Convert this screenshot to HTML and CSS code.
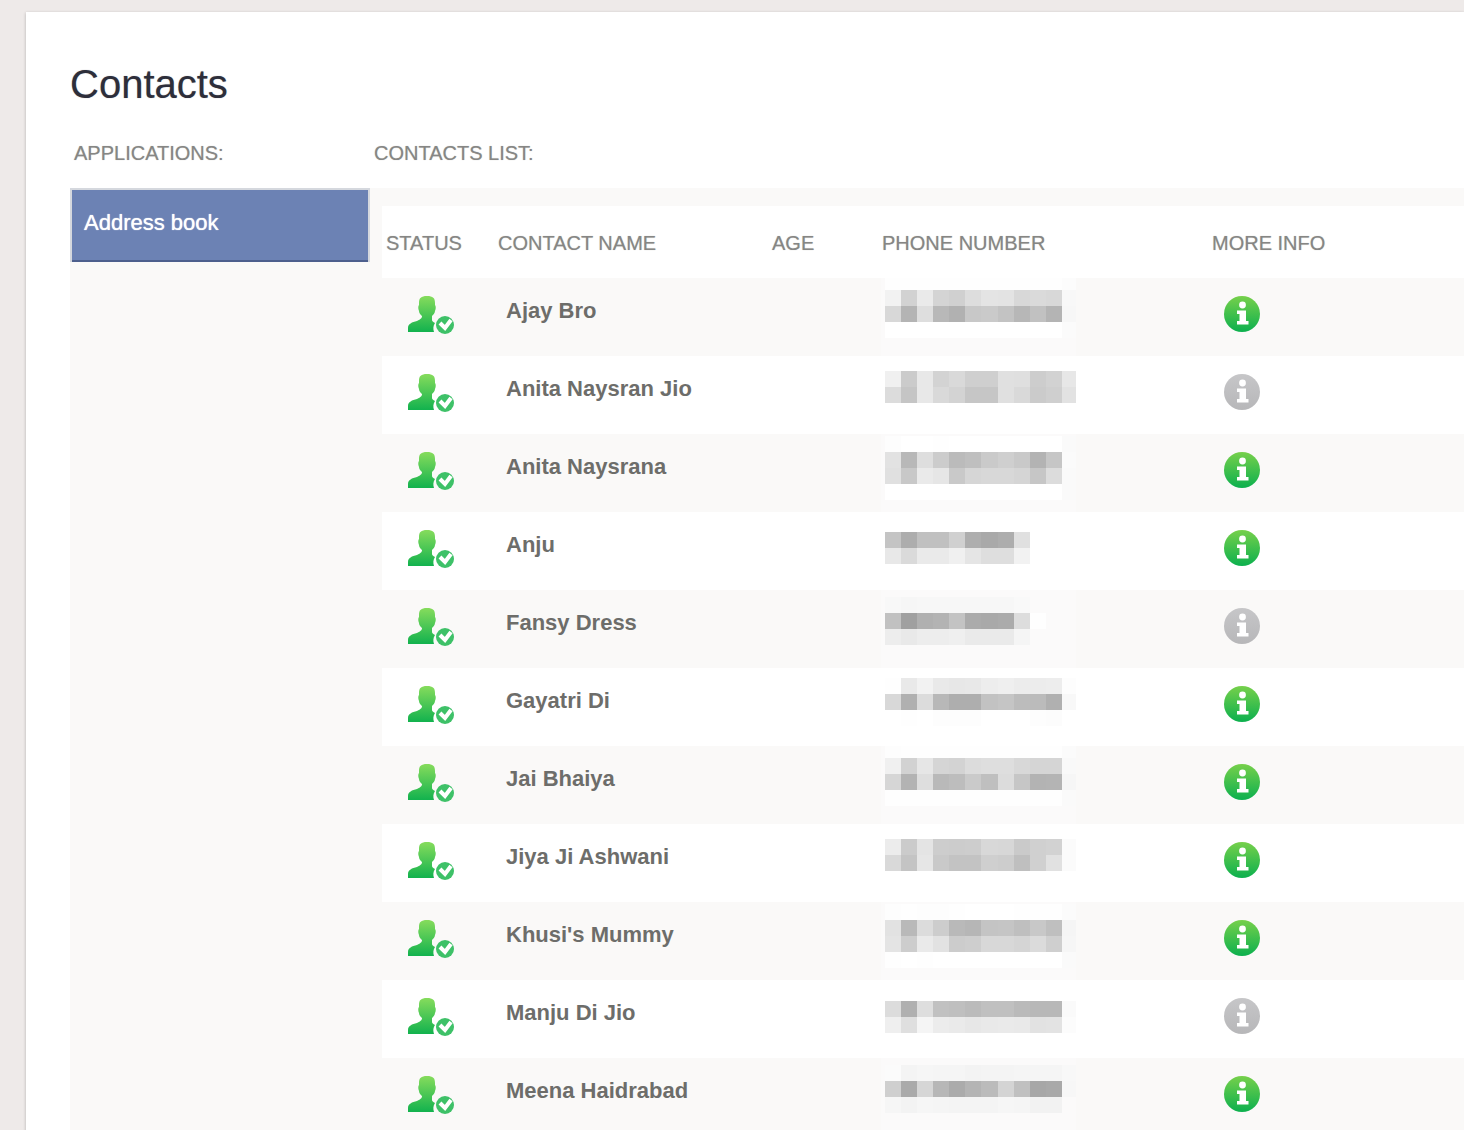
FILE: index.html
```html
<!DOCTYPE html>
<html lang="en">
<head>
<meta charset="utf-8">
<title>Contacts</title>
<link rel="stylesheet" href="styles.css">
</head>
<body>
<svg class="sprite" aria-hidden="true">
  <defs>
    <linearGradient id="green" x1="0" y1="0" x2="0" y2="1"><stop offset="0" stop-color="#86dc5c"/><stop offset="1" stop-color="#12b24e"/></linearGradient>
    <linearGradient id="green-info" x1="0" y1="0" x2="0" y2="1"><stop offset="0" stop-color="#76d04b"/><stop offset="1" stop-color="#0cb04e"/></linearGradient>
    <linearGradient id="gray-info" x1="0" y1="0" x2="0" y2="1"><stop offset="0" stop-color="#c6c6c8"/><stop offset="1" stop-color="#b7b7b9"/></linearGradient>
    <symbol id="person" viewBox="0 0 48 40">
      <path fill="url(#green)" d="M20 1c6 0 8 2 8 7v2c1 1 1 4 0 6 0 2-2 4-3 5v4c0 1 1 2 3 3-2 3-2 6-1 9H1v-4c0-4 4-6 9-7 4-2 5-3 5-5-2-2-3-3-3-5-1-2-1-5 0-6V8c0-5 2-7 8-7z"/>
      <circle cx="38" cy="30" r="9" fill="#3ec168"/>
      <path d="M33 28l5 5 6-8" fill="none" stroke="#fff" stroke-width="4"/>
    </symbol>
    <symbol id="letter" viewBox="0 0 36 36">
      <circle cx="18.5" cy="9" r="3.4" fill="#fff"/>
      <path fill="#fff" d="M13 14.5h9v10.500h2.500v3.500H13v-3.500h2.500v-7H13z"/>
    </symbol>
    <symbol id="info-on" viewBox="0 0 36 36"><circle cx="18" cy="18" r="18" fill="url(#green-info)"/><use href="#letter"/></symbol>
    <symbol id="info-off" viewBox="0 0 36 36"><circle cx="18" cy="18" r="18" fill="url(#gray-info)"/><use href="#letter"/></symbol>
  </defs>
</svg>
<main class="panel">
  <h1 class="title">Contacts</h1>
  <div class="columns">
    <section class="apps">
      <h2 class="label">APPLICATIONS:</h2>
      <nav class="menu"><a class="menu-item" href="#address-book">Address book</a></nav>
    </section>
    <section class="contacts" id="address-book">
      <h2 class="label">CONTACTS LIST:</h2>
      <div class="list">
        <table class="table">
          <thead>
            <tr><th class="status">STATUS</th><th class="name">CONTACT NAME</th><th class="age">AGE</th><th class="phone">PHONE NUMBER</th><th class="more">MORE INFO</th></tr>
          </thead>
          <tbody id="rows"></tbody>
        </table>
      </div>
    </section>
  </div>
</main>
<script src="contacts.js"></script>
</body>
</html>
```

FILE: styles.css
```css
* {
  box-sizing: border-box;
}

body {
  margin: 0;
  padding: 12px 0 0 26px;
  background: #eeeae9;
  color: #868684;
  font-family: "Liberation Sans", Arial, Helvetica, sans-serif;
  font-size: 20px;
  line-height: 24px;
}

.sprite {
  position: absolute;
  width: 0;
  height: 0;
}

.panel {
  padding: 48px 0 0 44px;
  background: #fff;
  box-shadow: 0 1px 3px rgba(0, 0, 0, 0.25);
}

.title {
  margin: 0 0 32px;
  color: #2d2e3a;
  font-size: 40px;
  font-weight: 400;
  line-height: 48px;
  text-shadow: 0 0 1px #9a9aa2;
}

.columns {
  display: flex;
}

.apps {
  display: flex;
  flex-direction: column;
  flex: 0 0 300px;
}

.contacts {
  flex: 1;
  min-width: 0;
}

.label {
  margin: 0;
  padding: 1px 4px 23px;
  font-size: 20px;
  font-weight: 400;
  line-height: 24px;
}

.label,
th {
  text-shadow: 0 0 1px #bcbcba;
}

.menu {
  flex: 1;
  background: #faf9f8;
}

.menu-item {
  display: block;
  height: 74px;
  padding: 21px 12px;
  border: 2px solid #d5d8de;
  border-bottom: 0;
  background: #6c82b4;
  box-shadow: inset 0 -2px #4d5f8d;
  color: #fff;
  font-size: 22px;
  text-decoration: none;
  text-shadow: 0 0 1px #fff;
}

.list {
  padding: 18px 0 0 12px;
  background: #faf9f8;
}

.table {
  width: 100%;
  border-collapse: collapse;
  table-layout: fixed;
  background: #fff;
}

th {
  height: 72px;
  padding: 2px 4px 0;
  font-weight: 400;
  text-align: left;
}

.status {
  width: 112px;
}

.name {
  width: 274px;
}

.age {
  width: 110px;
}

.phone {
  width: 330px;
}

td {
  height: 78px;
  padding: 0;
  vertical-align: top;
}

tbody tr:nth-child(odd) {
  background: #faf9f8;
}

td.status {
  padding: 17px 0 0 25px;
}

td.name {
  padding: 21px 12px;
  color: #6d6d6a;
  font-size: 22px;
  font-weight: 700;
}

td.phone {
  padding-left: 3px;
}

td.more {
  padding: 18px 16px;
}

.person,
.mosaic,
.info svg {
  display: block;
}

.person {
  width: 48px;
  height: 40px;
}

.mosaic {
  width: 195px;
  height: 78px;
}

tr:nth-child(odd) .mosaic {
  background: #fbfafa;
}

.info {
  display: block;
  width: 36px;
  height: 36px;
  padding: 0;
  border: 0;
  border-radius: 50%;
  background: none;
}

.info svg {
  width: 36px;
  height: 36px;
}
```

FILE: contacts.js
```js
// Phone numbers are masked with a mosaic: "top" is the first line's offset,
// and each line lists the gray level of its 16px tiles.
const contacts = [
  { name: "Ajay Bro", info: true, top: -4, lines: ["fefefefefefefefefefefefc", "f2d2ead4d0dde4e3d8dad8f8", "d8b4deb8b1c8cac3b7c1b4f7", "fffffffffffffffffffffffb"] },
  { name: "Anita Naysran Jio", info: false, top: 15, lines: ["f0cbe8d3d9cfcfe0dfcdd2e7", "dcc5e8d9d3c6c6e0d9cbcfe2"] },
  { name: "Anita Naysrana", info: true, top: 2, lines: ["fdfffffefffffffffffffffa", "e2b8deccbbbfcacfc9b3c6fb", "e0c8eae6c9d6d8d8d5c6dcfa", "fffffffffffffffffffffffa"] },
  { name: "Anju", info: true, top: 20, lines: ["c4adc0c0d0aea9ade0", "e8daeaeaf0e5dedef2"] },
  { name: "Fansy Dress", info: false, top: 7, lines: ["f8f6f7f7f7f7f7f7f9", "c1a0b0b3c3aba9abddfe", "ede9ededefeaeaeaf5"] },
  { name: "Gayatri Di", info: true, top: 10, lines: ["fee9f2e9e7e8edefececedfd", "d8b0dcb8aeaec2c5bcbbb0f8", "fffefffdfdfdfffffffdfc"] },
  { name: "Jai Bhaiya", info: true, top: -4, lines: ["fdfefefefefefefefefefefb", "f0d2e6d5d3dcdeded8d5d5f9", "d6b3deb9bdcabfdcc6b3b4f6", "fefefefefefefefefefefefa"] },
  { name: "Jiya Ji Ashwani", info: true, top: 15, lines: ["eccbe4cdcccdd8d7cad0d2fb", "d9c4e6c9c3c3cfcdbfd0e1fb"] },
  { name: "Khusi's Mummy", info: true, top: 2, lines: ["fdfefdfdfefffffffefefefb", "e2b9dccdb9b6c4c5bfc8bff5", "e4cdeae2ccced8d8d5dbcff6", "fefffefffffffffffffffffa"] },
  { name: "Manju Di Jio", info: false, top: 21, lines: ["dcb0dec1bfbbc0c0bab8b8fa", "efdff5eceae7e9eae9e2e3fc"] },
  { name: "Meena Haidrabad", info: true, top: 7, lines: ["fbf4f6f5f5f3f4f4f5f5f5f8", "cfaad6b7abb4bbd4c0a7a9f7", "f6f3f6f5f4f4f4f6f5f2f2"] }
];

function mosaic({ top, lines }) {
  const tiles = lines.flatMap((line, row) =>
    line.match(/../g).map((gray, col) => {
      const x = 4 + col * 16 + (col > 6 ? 1 : 0);
      const y = top + row * 16;
      const width = col === 6 ? 17 : 16;
      return `<rect x="${x}" y="${y}" width="${width}" height="16" fill="#${gray.repeat(3)}"/>`;
    })
  );
  return `<svg class="mosaic" viewBox="0 0 195 78" role="img" aria-label="Hidden number" shape-rendering="crispEdges">${tiles.join("")}</svg>`;
}

document.getElementById("rows").innerHTML = contacts.map(contact => `
  <tr>
    <td class="status"><svg class="person" aria-hidden="true"><use href="#person"/></svg></td>
    <td class="name">${contact.name}</td>
    <td class="age"></td>
    <td class="phone">${mosaic(contact)}</td>
    <td class="more"><button class="info" type="button" aria-label="More info"><svg aria-hidden="true"><use href="#info-${contact.info ? "on" : "off"}"/></svg></button></td>
  </tr>`).join("");
```
